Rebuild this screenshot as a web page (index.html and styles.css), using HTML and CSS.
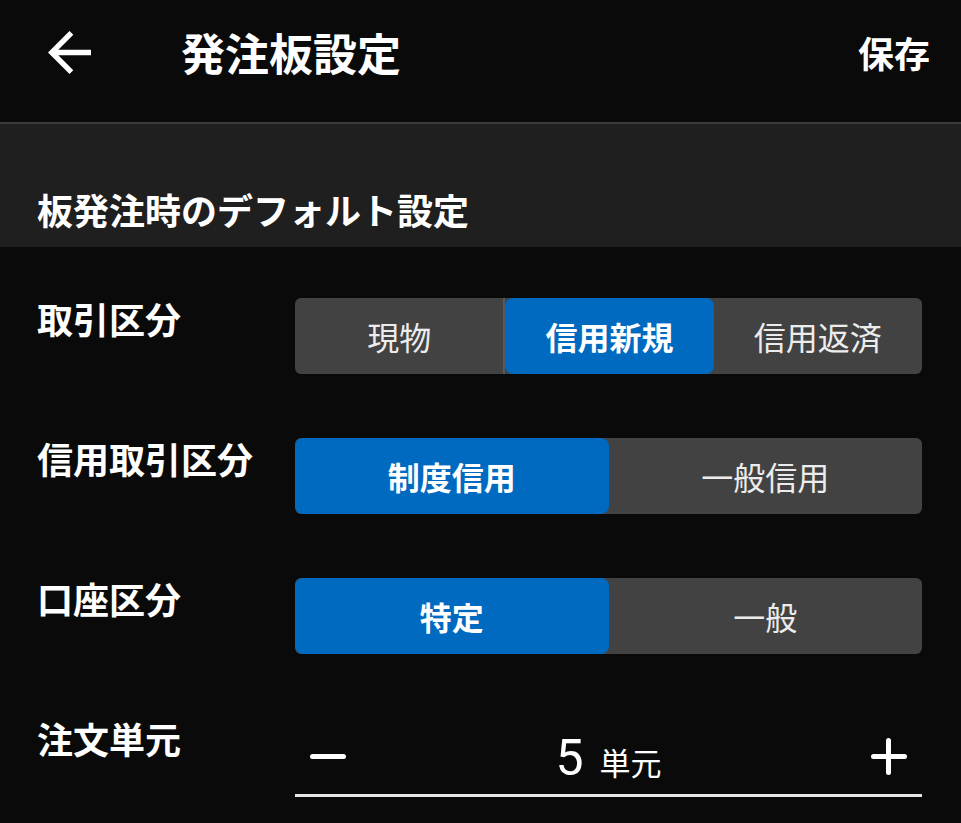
FILE: index.html
```html
<!DOCTYPE html>
<html lang="ja">
<head>
<meta charset="utf-8">
<title>発注板設定</title>
<link rel="stylesheet" href="styles.css">
</head>
<body>
<div class="app">
  <header class="topbar">
    <svg class="back" viewBox="4 4 16 16" width="43" height="43" aria-hidden="true">
      <path d="M20 11H7.83l5.59-5.59L12 4l-8 8 8 8 1.41-1.41L7.83 13H20v-2z" fill="#ffffff"/>
    </svg>
    <h1 class="title">発注板設定</h1>
    <span class="save">保存</span>
  </header>

  <section class="section-head">
    <h2 class="section-title">板発注時のデフォルト設定</h2>
  </section>

  <div class="settings">
    <div class="row">
      <div class="label">取引区分</div>
      <div class="seg">
        <div class="seg-item sep">現物</div>
        <div class="seg-item active">信用新規</div>
        <div class="seg-item">信用返済</div>
      </div>
    </div>

    <div class="row">
      <div class="label">信用取引区分</div>
      <div class="seg">
        <div class="seg-item active">制度信用</div>
        <div class="seg-item">一般信用</div>
      </div>
    </div>

    <div class="row">
      <div class="label">口座区分</div>
      <div class="seg">
        <div class="seg-item active">特定</div>
        <div class="seg-item">一般</div>
      </div>
    </div>

    <div class="row">
      <div class="label">注文単元</div>
      <div class="stepper">
        <span class="step-btn minus" aria-label="減らす"></span>
        <span class="value"><span class="num">5</span><span class="unit">単元</span></span>
        <span class="step-btn plus" aria-label="増やす"></span>
      </div>
    </div>
  </div>
</div>
</body>
</html>
```

FILE: styles.css
```css
* { box-sizing: border-box; }

html, body {
  margin: 0;
  padding: 0;
  background: #0a0a0a;
}

body {
  font-family: "Noto Sans CJK JP", "Noto Sans", sans-serif;
  color: #ffffff;
  width: 961px;
  height: 823px;
  overflow: hidden;
}

.topbar {
  height: 122px;
  padding: 0 31px 18px 48px;
  display: flex;
  align-items: center;
}

.back {
  display: block;
  flex: none;
}

.title {
  margin: 0 0 0 90px;
  font-size: 44px;
  line-height: 1;
  font-weight: 700;
  flex: 1;
}

.save {
  font-size: 36px;
  line-height: 1;
  font-weight: 700;
}

.section-head {
  border-top: 2px solid #3a3a3a;
  background: #1f1f1f;
  height: 125px;
  padding: 0 0 20px 37px;
  display: flex;
  align-items: flex-end;
}

.section-title {
  margin: 0;
  font-size: 36px;
  line-height: 1;
  font-weight: 700;
}

.settings {
  padding: 51px 39px 0 37px;
  display: flex;
  flex-direction: column;
  gap: 64px;
}

.row {
  display: grid;
  grid-template-columns: 258px 1fr;
  align-items: start;
}

.label {
  font-size: 36px;
  line-height: 1;
  font-weight: 700;
  padding-top: 2px;
}

.seg {
  height: 76px;
  background: #424242;
  border-radius: 6px;
  display: flex;
}

.seg-item {
  flex: 1;
  display: flex;
  align-items: center;
  justify-content: center;
  font-size: 32px;
  line-height: 1;
  color: #ececec;
  border-radius: 8px;
}

.seg-item.sep {
  border-right: 2px solid #5a5a5a;
  border-radius: 6px 0 0 6px;
}

.seg-item.active {
  background: #0069c0;
  color: #ffffff;
  font-weight: 700;
}

.stepper {
  height: 79px;
  border-bottom: 3px solid #e6e6e6;
  display: flex;
  align-items: center;
  justify-content: space-between;
  padding: 0 15px;
}

.step-btn {
  position: relative;
  width: 36px;
  height: 37px;
  display: block;
}

.step-btn::before,
.step-btn::after {
  content: "";
  position: absolute;
  background: #ffffff;
  border-radius: 3px;
}

.step-btn::before {
  left: 0;
  right: 0;
  top: 16px;
  height: 5px;
}

.plus::after {
  top: 0;
  bottom: 0;
  left: 15.5px;
  width: 5px;
}

.value {
  display: flex;
  align-items: baseline;
  gap: 16px;
  padding-top: 4px;
}

.num {
  font-size: 50px;
  line-height: 1;
  font-family: "Roboto", "Noto Sans", sans-serif;
}

.unit {
  font-size: 31px;
  line-height: 1;
}
```
